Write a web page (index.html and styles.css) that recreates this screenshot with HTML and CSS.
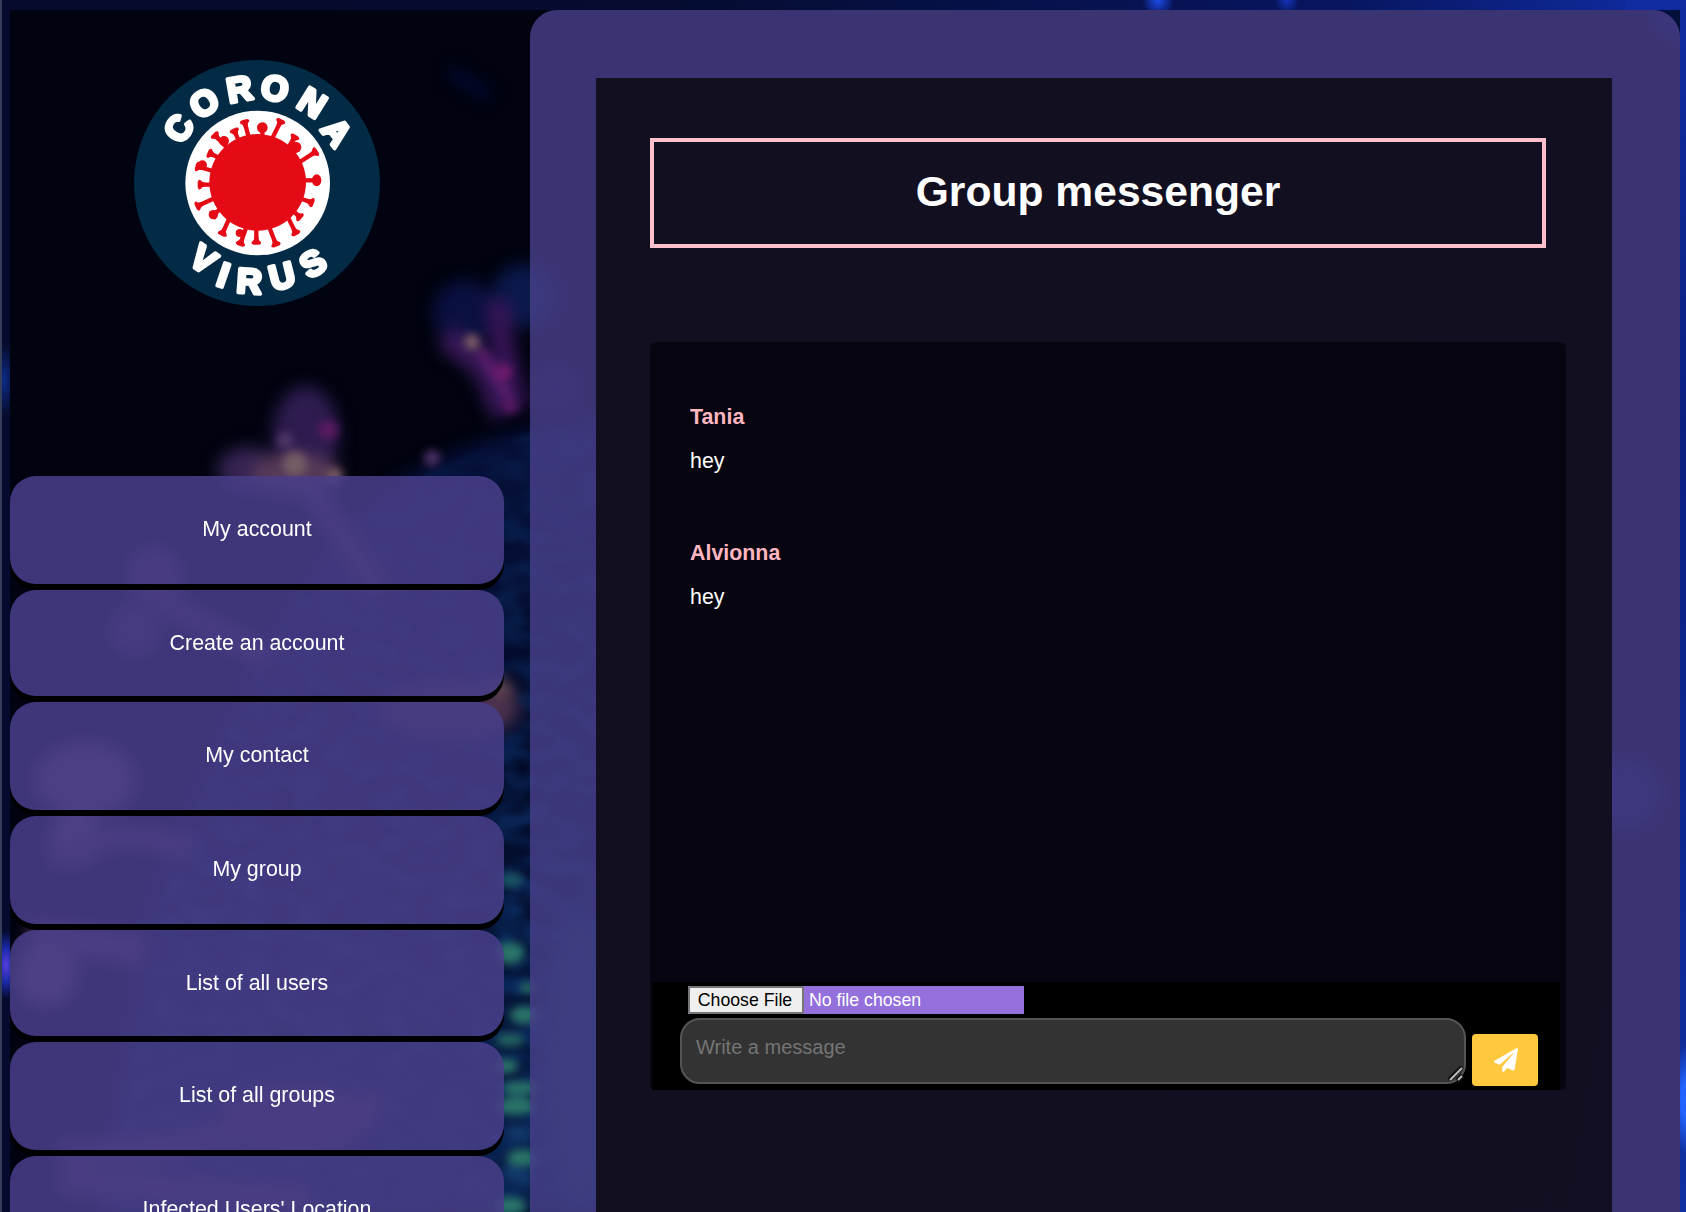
FILE: index.html
```html
<!DOCTYPE html>
<html lang="en">
<head>
<meta charset="utf-8">
<title>Group messenger</title>
<link rel="stylesheet" href="styles.css">
</head>
<body>
<div class="page">
  <svg class="scene" viewBox="0 0 1670 1202" preserveAspectRatio="xMinYMin slice" aria-hidden="true">
    <defs>
      <filter id="soft" x="-50%" y="-50%" width="200%" height="200%" color-interpolation-filters="sRGB"><feGaussianBlur stdDeviation="8"/></filter>
      <filter id="fine" x="-50%" y="-50%" width="200%" height="200%" color-interpolation-filters="sRGB"><feGaussianBlur stdDeviation="4"/></filter>
      <filter id="grain" x="0" y="0" width="100%" height="100%" color-interpolation-filters="sRGB">
        <feTurbulence type="fractalNoise" baseFrequency="0.035 0.06" numOctaves="2" seed="8"/>
        <feColorMatrix values="0 0 0 0 0.04  0 0 0 0 0.16  0 0 0 0 0.36  2.200 2 0 0 -1.700"/>
        <feComposite in2="SourceGraphic" operator="in"/>
        <feGaussianBlur stdDeviation="2.500"/>
      </filter>
      <linearGradient id="cell" x1="0" y1="0" x2="0" y2="1">
        <stop offset="0" stop-color="#06103a"/><stop offset=".45" stop-color="#030a28"/><stop offset="1" stop-color="#08204a"/>
      </linearGradient>
      <linearGradient id="fade" x1="0" y1="0" x2="0" y2="1">
        <stop offset="0" stop-color="#fff" stop-opacity=".35"/><stop offset=".5" stop-color="#fff" stop-opacity=".55"/><stop offset=".75" stop-color="#fff"/>
      </linearGradient>
      <mask id="deep"><rect width="700" height="1202" fill="url(#fade)"/></mask>
    </defs>
    <rect width="1670" height="1202" fill="#010310"/>
    <path d="M700 400Q500 400 390 470Q250 560 130 900L90 1202H700Z" fill="url(#cell)" filter="url(#soft)"/>
    <g mask="url(#deep)"><path d="M600 415Q500 415 400 475Q260 560 150 900L100 1202H600Z" filter="url(#grain)"/></g>
    <g filter="url(#soft)">
      <path d="M440 60l38 26" stroke="#050a38" stroke-width="10"/>
      <circle cx="455" cy="302" r="32" fill="#0a1040"/><circle cx="514" cy="286" r="32" fill="#0a184a"/>
      <path d="M435 325l40 32 20 48" stroke="#381858" stroke-width="26" fill="none"/>
      <path d="M488 290l4 40 14 70" stroke="#351455" stroke-width="24" fill="none"/>
      <ellipse cx="296" cy="424" rx="33" ry="48" fill="#2e1c50"/>
      <ellipse cx="238" cy="460" rx="31" ry="23" fill="#352352"/>
      <ellipse cx="285" cy="465" rx="45" ry="22" fill="#573a58"/>
      <circle cx="145" cy="565" r="28" fill="#4a2a58"/><circle cx="125" cy="620" r="26" fill="#3c284e"/>
      <path d="M300 480l70 100M150 590l110 60" stroke="#482a55" stroke-width="24"/>
      <circle cx="488" cy="684" r="14" fill="#9a6458"/><ellipse cx="440" cy="700" rx="70" ry="28" fill="#49304c"/>
      <ellipse cx="75" cy="770" rx="50" ry="38" fill="#6e4860"/><circle cx="65" cy="830" r="26" fill="#705a65"/>
      <path d="M40 850q70-40 140-10" stroke="#5c3558" stroke-width="22" fill="none"/>
      <path d="M20 925l115 15" stroke="#653562" stroke-width="32"/><circle cx="36" cy="965" r="31" fill="#705563"/>
      <path d="M50 1145l120-10 200-40M50 1170l250 20" stroke="#523458" stroke-width="28"/>
      <ellipse cx="285" cy="1110" rx="75" ry="35" fill="#563454"/>
      <circle cx="1615" cy="784" r="34" fill="#0e1450"/><circle cx="545" cy="380" r="22" fill="#0c0a2c"/>
      <ellipse cx="570" cy="1050" rx="36" ry="150" fill="#103458"/>
    </g>
    <g filter="url(#fine)">
      <circle cx="462" cy="332" r="8" fill="#7a5a65"/><path d="M470 340l29 48" stroke="#5a1c6a" stroke-width="10"/>
      <circle cx="494" cy="362" r="8" fill="#701a6c"/><circle cx="500" cy="396" r="7" fill="#5b1a65"/>
      <circle cx="275" cy="430" r="8" fill="#503868"/><circle cx="318" cy="420" r="10" fill="#581a60"/>
      <circle cx="285" cy="454" r="12" fill="#755d65"/><circle cx="324" cy="466" r="8" fill="#7a5a62"/>
      <circle cx="422" cy="448" r="8" fill="#4d3066"/>
      <g fill="#2a7468"><ellipse cx="501" cy="870" rx="12" ry="7" opacity=".6"/><ellipse cx="500" cy="943" rx="14" ry="11"/><ellipse cx="514" cy="1005" rx="14" ry="9"/><ellipse cx="500" cy="1030" rx="14" ry="7" opacity=".8"/><ellipse cx="496" cy="1056" rx="12" ry="7"/><ellipse cx="510" cy="1078" rx="18" ry="7"/><ellipse cx="506" cy="1096" rx="20" ry="9"/><ellipse cx="512" cy="1148" rx="15" ry="9"/><ellipse cx="500" cy="1196" rx="16" ry="9"/><ellipse cx="518" cy="978" rx="9" ry="5"/></g>
      <path d="M498 1120l22 6M494 1160l26 10" stroke="#12396a" stroke-width="14"/>
      <circle cx="1670" cy="0" r="30" fill="#04103c"/>
    </g>
  </svg>
  <aside class="sidebar">
    <svg class="logo" viewBox="42 31 738 738" role="img" aria-label="Corona virus">
      <defs>
        <marker id="spike" viewBox="-14 -16 28 32" markerWidth="28" markerHeight="32" markerUnits="userSpaceOnUse" refX="0" refY="0" orient="auto"><path d="M-14 -5Q-2-6 2-13Q8-18 11-8V8Q8 18 2 13Q-2 6-14 5Z" fill="#e50b16"/></marker>
      </defs>
      <circle cx="411" cy="400" r="369" fill="#032b45"/>
      <circle cx="413" cy="400" r="217" fill="#fff"/>
      <circle cx="413" cy="398" r="145" fill="#e50b16"/>
      <g class="spikes">
        <path d="M388 270L375 221"/><path d="M427 270V234"/><path d="M455 270L480 219"/><path d="M363 290L345 247"/>
        <path d="M328 302L288 260"/><path d="M310 330L273 313"/><path d="M300 370L237 352"/><path d="M286 405H244"/>
        <path d="M292 442L237 467"/><path d="M310 470L282 494"/><path d="M333 495L309 548"/><path d="M382 523L363 578"/>
        <path d="M409 530V574"/><path d="M445 525L466 580"/><path d="M500 495L525 546"/><path d="M515 480L536 499"/>
        <path d="M535 444L571 457"/><path d="M545 392H589"/><path d="M530 343L583 309"/><path d="M490 318L522 266"/>
      </g>
      <g fill="#e50b16"><circle cx="427" cy="234" r="16"/><circle cx="280" cy="495" r="14"/><ellipse cx="590" cy="392" rx="14" ry="18"/><circle cx="312" cy="274" r="15"/><circle cx="527" cy="293" r="17"/><circle cx="247" cy="346" r="14"/><circle cx="359" cy="550" r="12"/></g>
      <text class="mark" x="186.900 240 327.700 417.500 525.600 599.600" y="286.400 212.900 159.900 143 169.900 239.400" rotate="-58 -35 -10 12 32 52">CORONA</text>
      <text class="mark" x="201.300 285 348.100 458 568.500" y="638.700 705.500 727.700 723 689.700" rotate="35 19 4 -14 -32">VIRUS</text>
    </svg>
    <nav class="menu">
      <a class="item">My account</a>
      <a class="item">Create an account</a>
      <a class="item">My contact</a>
      <a class="item">My group</a>
      <a class="item">List of all users</a>
      <a class="item">List of all groups</a>
      <a class="item">Infected Users' Location</a>
    </nav>
  </aside>
  <main class="panel">
    <section class="messenger">
      <h1 class="title">Group messenger</h1>
      <div class="chat">
        <div class="messages">
          <article class="message"><h2 class="author">Tania</h2><p class="text">hey</p></article>
          <article class="message"><h2 class="author">Alvionna</h2><p class="text">hey</p></article>
        </div>
        <form class="composer">
          <input class="file" type="file">
          <div class="row">
            <div class="field">
              <textarea class="input" placeholder="Write a message"></textarea>
              <svg class="grip" viewBox="0 0 16 16"><path d="M1 14L14 1M9 14.500L14.500 9.500" stroke="#111" stroke-width="4.500"/><path d="M2 14L14 2M10 14L14 10" stroke="#bbb" stroke-width="2"/></svg>
            </div>
            <button class="send" type="button" aria-label="Send"><svg viewBox="0 0 512 512"><path fill="#fff" d="M476 3.200L12.500 270.600c-18.100 10.400-15.800 35.600 2.200 43.200L121 358.400l287.300-253.200c5.500-4.900 13.300 2.600 8.600 8.300L176 407v80.500c0 23.600 28.500 32.900 42.500 15.800L282 426l124.600 52.200c14.200 6 30.400-2.900 33-18.200l72-432C515 7.800 493.300-6.800 476 3.200z"/></svg></button>
          </div>
        </form>
      </div>
    </section>
  </main>
</div>
</body>
</html>
```
FILE: styles.css
```css
* { box-sizing: border-box; }

body {
  margin: 0;
  height: 100vh;
  overflow: hidden;
  padding: 10px 6px 0 8px;
  border-left: 2px solid #363f59;
  font-family: "Liberation Sans", Arial, sans-serif;
  color: #fff;
  background:
    radial-gradient(ellipse 16px 18px at 1158px 0, #1c4be8, transparent),
    radial-gradient(ellipse 12px 14px at 1287px 0, #1434b8, transparent),
    radial-gradient(ellipse 16px 55px at 100% 1100px, #2364ff 30%, transparent),
    radial-gradient(ellipse 14px 36px at 4px 380px, #0d2a86, transparent),
    radial-gradient(ellipse 14px 34px at 6px 965px, #5a3de0, #1a2aa8 50%, transparent),
    linear-gradient(#102ca0, #0b1f80 35%, #102fa0) right / 60px 100% no-repeat,
    linear-gradient(90deg, #060a2c, #050c30 40%, #071250 65%, #081660 80%, #0f2a9c 97%);
}

.page {
  position: relative;
  height: 100%;
  display: flex;
  gap: 26px;
  overflow: hidden;
}

.scene {
  position: absolute;
  inset: 0;
  width: 1670px;
  height: 1202px;
}

.sidebar {
  position: relative;
  flex: 0 0 494px;
  display: flex;
  flex-direction: column;
  align-items: center;
  padding-top: 50px;
}

.logo { flex: none; width: 246px; height: 246px; }

.spikes path {
  stroke: #e50b16;
  stroke-width: 13px;
  marker-end: url(#spike);
}

.mark {
  font-size: 104px;
  font-weight: bold;
  fill: #fff;
  stroke: #fff;
  stroke-width: 11px;
  stroke-linejoin: round;
}

.menu {
  width: 100%;
  margin-top: 170px;
  display: flex;
  flex-direction: column;
  gap: 6px;
}

.item {
  height: 108px;
  flex: none;
  display: flex;
  align-items: center;
  justify-content: center;
  padding-bottom: 2px;
  border-radius: 26px;
  background: rgba(72, 62, 137, 0.87);
  box-shadow: 0 6px 0 #000;
  font-size: 21.400px;
}

.item:nth-child(3n + 2) {
  height: 106px;
  padding-bottom: 0;
}

.panel {
  position: relative;
  flex: 1;
  display: flex;
  padding: 68px 68px 0 66px;
  border-radius: 27px 27px 0 0;
  background: rgba(72, 63, 138, 0.82);
}

.messenger {
  flex: 1;
  padding: 60px 46px 0 54px;
  background: linear-gradient(100deg, #120f20, #110f21);
}

.title {
  height: 110px;
  margin: 0 20px 94px 0;
  display: flex;
  align-items: center;
  justify-content: center;
  padding-bottom: 4px;
  border: 4px solid #ffc0cb;
  font-size: 42.600px;
}

.chat {
  height: 748px;
  display: flex;
  flex-direction: column;
  border-radius: 6px;
  background: #070510;
}

.messages {
  flex: 1;
  display: flex;
  flex-direction: column;
  gap: 60px;
  padding: 63px 40px 0;
}

.message {
  display: flex;
  flex-direction: column;
  gap: 20px;
}

.author,
.text {
  margin: 0;
  font-size: 21.400px;
  line-height: 24px;
}

.author { color: #ffb6c1; }
.message + .message { margin-top: 8px; }

.composer {
  height: 108px;
  margin: 0 6px 0 2px;
  padding: 4px 22px 4px 28px;
  display: flex;
  flex-direction: column;
  gap: 4px;
  background: #000;
}

.file {
  width: 336px;
  height: 28px;
  margin-left: 8px;
  font: 17.700px/24px "Liberation Sans", Arial, sans-serif;
  color: #fff;
  background: mediumpurple;
}

.file::file-selector-button {
  width: 116px;
  height: 28px;
  padding: 0 2px 0 0;
  margin-right: 5px;
  border: 2px solid #767676;
  border-radius: 2px;
  font: inherit;
  color: #000;
  background: #efefef;
}

.row {
  display: flex;
  align-items: flex-end;
  gap: 6px;
}

.field {
  position: relative;
  flex: 1;
  display: flex;
  margin-bottom: 2px;
}

.input {
  flex: 1;
  height: 66px;
  padding: 15px 14px 13px;
  border: 2px solid #555;
  border-radius: 20px;
  font: 20px/24px "Liberation Sans", Arial, sans-serif;
  color: #fff;
  background: #333;
  resize: none;
}

.input::placeholder { color: #757575; }

.grip {
  position: absolute;
  right: 2px;
  bottom: 2px;
  width: 16px;
  height: 16px;
}

.send {
  width: 66px;
  height: 52px;
  padding: 0 0 0 1px;
  display: grid;
  place-items: center;
  border: 0;
  border-radius: 4px;
  background: #ffc83d;
}

.send svg { width: 24px; height: 24px; }
```
